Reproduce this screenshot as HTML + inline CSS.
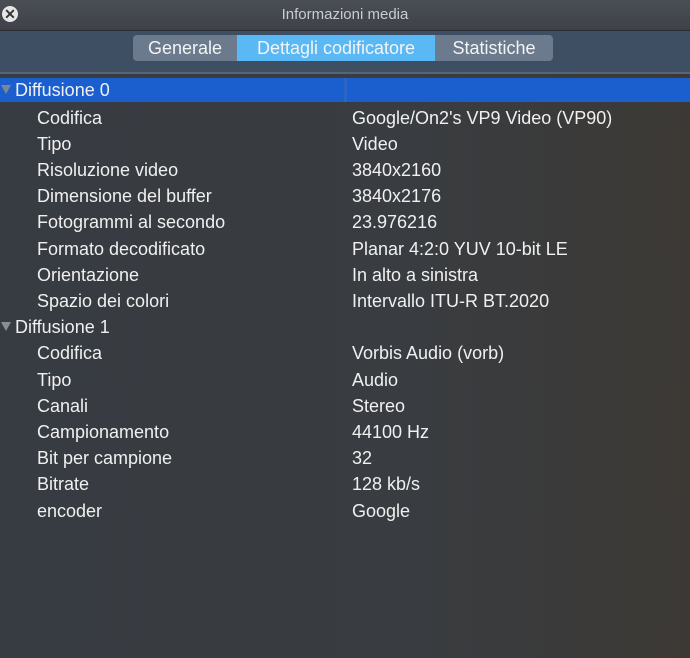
<!DOCTYPE html><html><head><style>
body{margin:0;width:690px;height:658px;overflow:hidden;background:#383c42;font-family:"Liberation Sans",sans-serif;-webkit-font-smoothing:antialiased}
.title{position:absolute;left:0;top:0;width:690px;height:30px;background:linear-gradient(#4a4e55,#3e4248);color:#c9ccd0;font-size:15px;text-align:center;line-height:30px;border-bottom:1px solid #2a2c30}
.close{position:absolute;left:2px;top:6px;width:16px;height:16px;border-radius:50%;background:#e6e6e6;color:#333;font-size:14px;font-weight:bold;line-height:16px;text-align:center}
.tb{position:absolute;left:0;top:31px;width:690px;height:41px;background:#3f4f63;border-bottom:2px solid #56667a}
.seg{position:absolute;left:133px;top:4px;height:26px;width:420px;display:flex;border-radius:4px;overflow:hidden;background:#6b7a8c;font-size:18px;color:#f2f4f6;line-height:26px}
.bg{position:absolute;top:74px;left:0;width:690px;height:584px;background:linear-gradient(90deg,#373c42 0%,#393c40 60%,#3c3935 100%)}
.row{position:absolute;left:0;width:690px;height:26px;font-size:18px;color:#f0f0f0;line-height:26px}
.row .k{position:absolute;left:37px}.row .v{position:absolute;left:352px}
.hl{background:#1b5fcf}
.tri{position:absolute;left:1px;top:8px;width:0;height:0;border-left:5px solid transparent;border-right:5px solid transparent;border-top:9px solid #8a8d92}
</style></head><body>
<div class="title"><div class="close">✕</div>Informazioni media</div>
<div class="tb"><div class="seg"><div style="width:104px;text-align:center">Generale</div><div style="width:198px;text-align:center;background:#5ab8f5">Dettagli codificatore</div><div style="width:118px;text-align:center">Statistiche</div></div></div>
<div class="bg"></div>
<div class="row hl" style="top:78px;height:24px;line-height:25px"><div class="tri" style="top:7px;border-top-color:#7c8696"></div><span style="position:absolute;left:15px">Diffusione 0</span><div style="position:absolute;left:344px;top:0;width:3px;height:24px;background:#2c66c4"></div></div>
<div class="row" style="top:105px"><span class="k">Codifica</span><span class="v">Google/On2's VP9 Video (VP90)</span></div>
<div class="row" style="top:131px"><span class="k">Tipo</span><span class="v">Video</span></div>
<div class="row" style="top:157px"><span class="k">Risoluzione video</span><span class="v">3840x2160</span></div>
<div class="row" style="top:183px"><span class="k">Dimensione del buffer</span><span class="v">3840x2176</span></div>
<div class="row" style="top:209px"><span class="k">Fotogrammi al secondo</span><span class="v">23.976216</span></div>
<div class="row" style="top:236px"><span class="k">Formato decodificato</span><span class="v">Planar 4:2:0 YUV 10-bit LE</span></div>
<div class="row" style="top:262px"><span class="k">Orientazione</span><span class="v">In alto a sinistra</span></div>
<div class="row" style="top:288px"><span class="k">Spazio dei colori</span><span class="v">Intervallo ITU-R BT.2020</span></div>
<div class="row" style="top:314px"><div class="tri"></div><span style="position:absolute;left:15px">Diffusione 1</span></div>
<div class="row" style="top:340px"><span class="k">Codifica</span><span class="v">Vorbis Audio (vorb)</span></div>
<div class="row" style="top:367px"><span class="k">Tipo</span><span class="v">Audio</span></div>
<div class="row" style="top:393px"><span class="k">Canali</span><span class="v">Stereo</span></div>
<div class="row" style="top:419px"><span class="k">Campionamento</span><span class="v">44100 Hz</span></div>
<div class="row" style="top:445px"><span class="k">Bit per campione</span><span class="v">32</span></div>
<div class="row" style="top:471px"><span class="k">Bitrate</span><span class="v">128 kb/s</span></div>
<div class="row" style="top:498px"><span class="k">encoder</span><span class="v">Google</span></div>
</body></html>
